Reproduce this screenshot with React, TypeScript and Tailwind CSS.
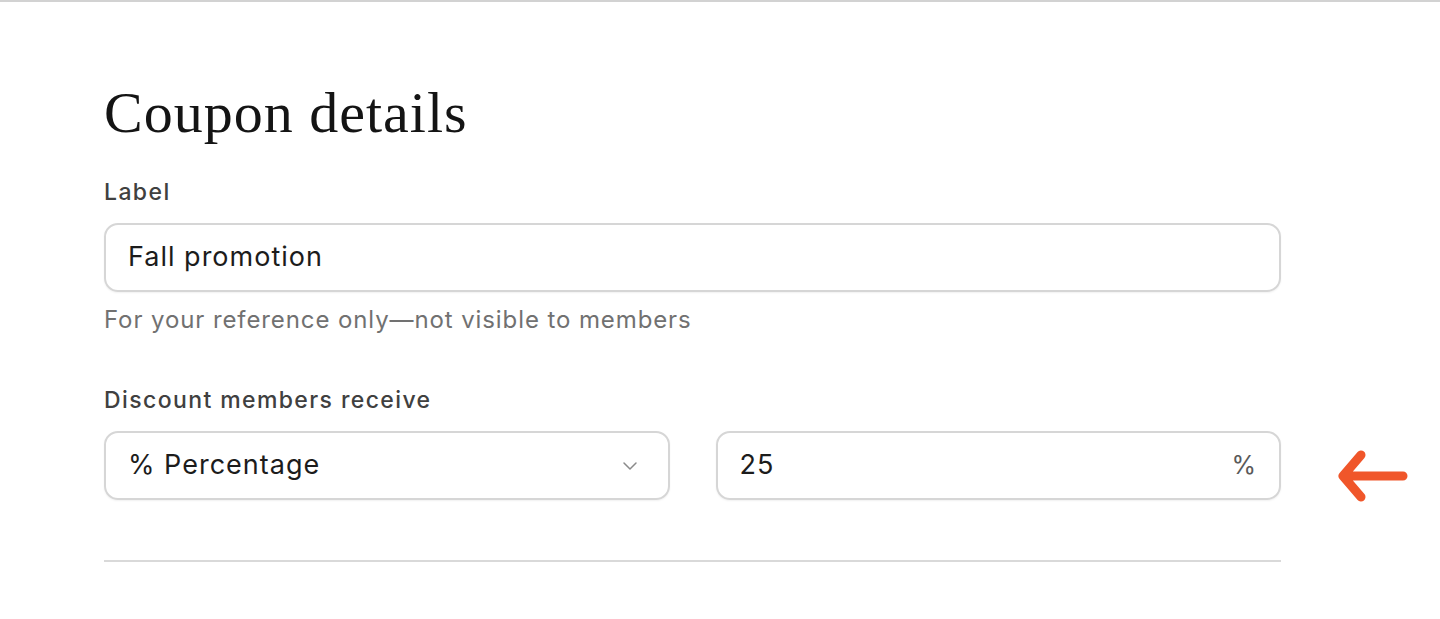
import { ChevronDown } from 'lucide-react';

const sans = { fontFamily: 'Inter, "Noto Sans", sans-serif' };

function FieldLabel({ children }: { children: string }) {
    return <div className="text-[23px] leading-[28px] font-medium tracking-[1.4px] text-[#404040] mb-[17px]">{children}</div>;
}

export default function App() {
    return (
        <div className="w-[1440px] h-[619px] bg-white border-t-2 border-[#d2d2d2] overflow-hidden" style={sans}>
            <div className="flex items-start">
                <div className="ml-[104px] w-[1177px] pt-[75px]">
                    <h1 className="text-[58px] leading-[72px] tracking-[1px] text-[#141414] mb-[29px]" style={{ fontFamily: '"Liberation Serif", "DejaVu Serif", serif' }}>
                        Coupon details
                    </h1>

                    <FieldLabel>Label</FieldLabel>
                    <div className="h-[69px] rounded-[14px] border-2 border-[#d6d6d6] shadow-[0_1px_2px_rgba(0,0,0,0.06)] flex items-center px-[22px] text-[27px] tracking-[1px] text-[#1c1c1c]">
                        Fall promotion
                    </div>
                    <div className="mt-[12px] text-[24px] leading-[32px] tracking-[0.9px] text-[#717171]">For your reference only—not visible to members</div>

                    <div className="mt-[50px]">
                        <FieldLabel>Discount members receive</FieldLabel>
                        <div className="grid grid-cols-2 gap-[46px]">
                            <div className="h-[69px] rounded-[14px] border-2 border-[#d6d6d6] shadow-[0_1px_2px_rgba(0,0,0,0.06)] flex items-center justify-between pl-[22px] pr-[26px] text-[27px] tracking-[1px] text-[#1c1c1c]">
                                <span>% Percentage</span>
                                <ChevronDown size={24} strokeWidth={1.5} className="text-[#8a8a8a]" />
                            </div>
                            <div className="h-[69px] rounded-[14px] border-2 border-[#d6d6d6] shadow-[0_1px_2px_rgba(0,0,0,0.06)] flex items-center justify-between pl-[22px] pr-[22px] text-[27px] tracking-[1px] text-[#1c1c1c]">
                                <span>25</span>
                                <span className="text-[#5a5a5a] text-[25px]">%</span>
                            </div>
                        </div>
                    </div>

                    <div className="mt-[60px] border-t-2 border-[#d9d9d9]" />
                </div>
                <div className="ml-[56px] mt-[447px]">
                    <svg width="72" height="54" viewBox="0 0 72 54" fill="none">
                        <path d="M66 27H10M24 6L6 27l18 21" stroke="#f0562a" strokeWidth="9" strokeLinecap="round" strokeLinejoin="round" />
                    </svg>
                </div>
            </div>
        </div>
    );
}
